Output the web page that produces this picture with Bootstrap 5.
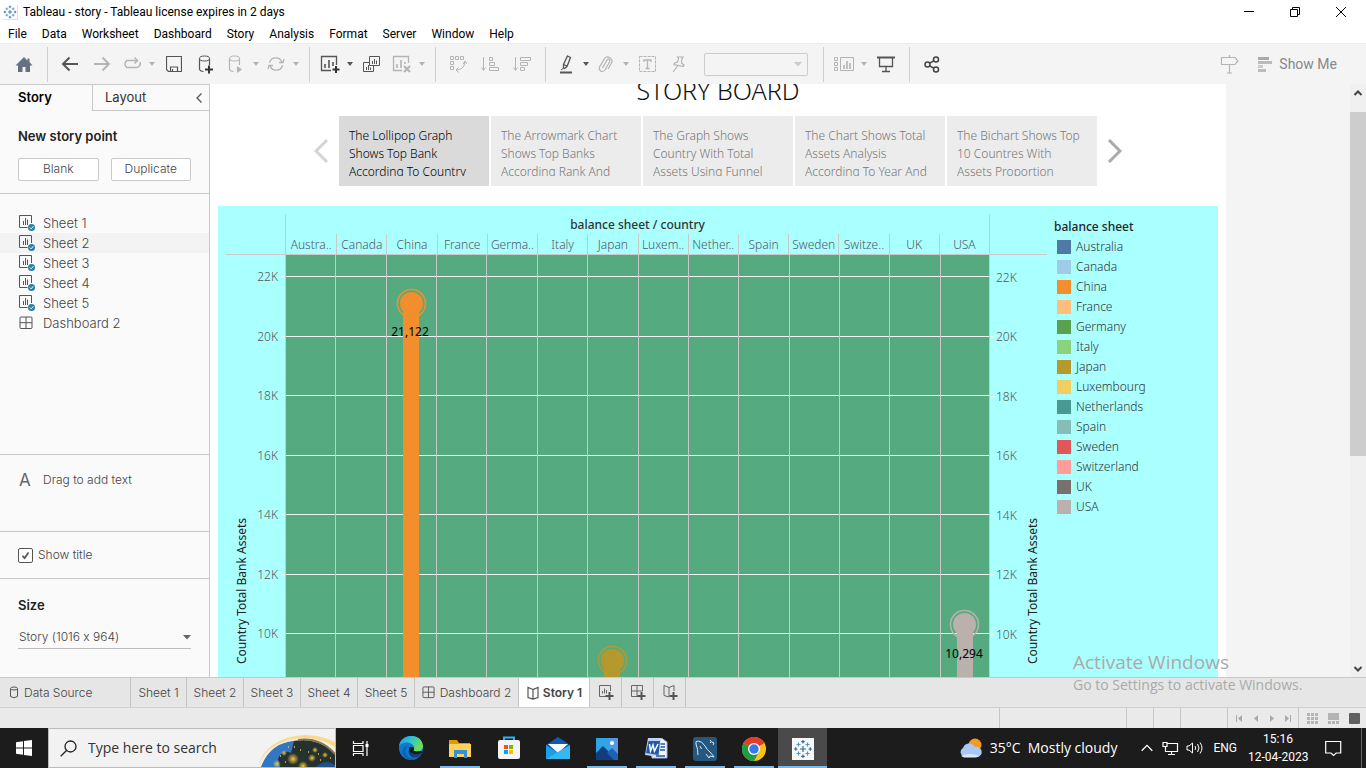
<!DOCTYPE html>
<html lang="en">
<head>
<meta charset="utf-8">
<meta name="viewport" content="width=device-width, initial-scale=1">
<title>Tableau - story</title>
<link href="https://cdn.jsdelivr.net/npm/bootstrap@5.3.0/dist/css/bootstrap.min.css" rel="stylesheet">
<style>
:root{--ui:"Open Sans","Noto Sans",sans-serif;--menu:Roboto,"Open Sans",sans-serif;--tab:Inter,Roboto,sans-serif;--viz:"Noto Sans","Open Sans",sans-serif;--rule:#c8c8c8}
body{font-family:var(--tab);font-size:13px;line-height:20px;color:#444;background:#fff}
svg{display:block;flex:none;fill:none}
button{background:none;border:0;padding:0;color:inherit}
.titlebar{height:24px;font:12px/24px var(--menu);color:#000}
.menus{height:19px;font:12px/20px var(--menu);padding-left:8px;gap:15px}
.menus a{color:#000;text-decoration:none}
.tools{height:41px;background:#f4f4f4;border-top:1px solid #ececec;color:#555}
.tools button{display:flex;align-items:center;justify-content:center;height:28px;flex:none}
.b32{width:32px}.b28{width:28px}.b12{width:12px}
.b12::after{content:"";border:3px solid transparent;border-top:4px solid currentColor;border-bottom:0}
.off{color:#b4b4b4}
.tools .showme{margin:0 29px 0 12px;gap:6px;color:#888;font:14px/20px var(--menu)}
.split{width:1px;height:35px;background:#cfcfcf;margin:0 6px 0 7px;flex:none}
.side{width:210px;flex:none;background:#fafafa;border-right:1px solid var(--rule);border-top:1px solid var(--rule)}
.side section{border-bottom:1px solid var(--rule)}
.side h2{font-size:13px;line-height:20px;font-weight:600;color:#222;margin:0}
.side .tabs{height:26px;line-height:25px;color:#333}
.side .tabs .other{border-left:1px solid var(--rule);border-bottom:1px solid var(--rule);padding:0 6px 0 12px}
.point{height:23px;border:1px solid #c8c8c8!important;border-radius:2px;background:#fff!important;font-size:12px;line-height:18px;padding-bottom:2px!important;color:#444}
.src{font-size:13px;height:20px;padding-left:18px;gap:7px}
.src.over{background:#f3f3f3}
.small12{font-size:12px}
.light{font-weight:300}
.side .form-check-input{width:15px;height:15px;margin:0;border:1px solid #555;border-radius:2px;background-color:#fff;box-shadow:none}
.side .form-check-input:checked{background-image:url("data:image/svg+xml,%3Csvg xmlns='http://www.w3.org/2000/svg' viewBox='0 0 15 15'%3E%3Cpath d='M4 8l2.5 2.5L11 4' fill='none' stroke='%23555' stroke-width='2'/%3E%3C/svg%3E")}
.size{border:0;border-bottom:1px solid #bbb;border-radius:0;background-color:transparent;font-size:12px;line-height:20px;padding:0 16px 0 1px;margin-top:11px;color:#444;height:23px;background-position:right 0 center;background-size:8px;font-weight:300;font-feature-settings:"calt" 0}
.size{background-image:url("data:image/svg+xml,%3Csvg xmlns='http://www.w3.org/2000/svg' viewBox='0 0 8 8'%3E%3Cpath d='M0 2h8L4 6.500z' fill='%23666'/%3E%3C/svg%3E")}
.pick{width:104px;height:23px;border:1px solid #ccc;border-radius:2px;margin:0 8px 0 12px;background:#f4f4f4 url("data:image/svg+xml,%3Csvg xmlns='http://www.w3.org/2000/svg' viewBox='0 0 8 8'%3E%3Cpath d='M0 2h8L4 6.500z' fill='%23ccc'/%3E%3C/svg%3E") right 5px center/8px no-repeat!important}
.stage{background:#f4f4f4;min-width:0}
.paper{width:1016px;height:964px;background:#fff;margin-top:-16px;padding:0 8px;flex:none;font-family:var(--viz)}
.paper h1{font-size:25px;line-height:44px;font-weight:300;color:#111;margin:0 0 4px;text-align:center}
.caption{width:150px;height:70px;background:#ececec;color:#777;font-size:12px;line-height:18px;padding:11px 0 10px 10px;text-align:left}
.caption span{display:block;height:49px;overflow:hidden;white-space:pre-line}
.caption.on{background:#dadada;color:#000}
.dash{background:#aff;margin-top:20px;height:760px}
.viz{width:830px;font-size:12px;flex:none}
.head{margin:8px 0 0 67px;width:705px;border:solid #c9c9c9;border-width:0 1px;height:40px}
.head .top{height:20px;line-height:22px;color:#333;font-weight:500;text-align:center}
.heads{display:grid;grid-template-columns:repeat(14,1fr);height:20px;line-height:22px;color:#556;text-align:center}
.heads div{border-left:1px solid #c9c9c9;white-space:nowrap;min-width:0;display:flex;justify-content:center}
.heads div:first-child{border:0}
.rule{height:1px;background:#c9c9c9;margin-left:8px;width:821px}
.legend{font-size:12px;color:#333;padding:11px 0 0 6px}
.legend i{width:14px;height:14px;margin:0 5px 0 3px}
.scroll{width:16px;background:#f0f0f0;flex:none}
.thumb{height:344px;background:#cdcdcd}
.sheets{height:31px;background:#e6e6e6;border-top:1px solid var(--rule);border-bottom:1px solid #d0d0d0;font-size:12px}
.sheets button{border-right:1px solid #c4c4c4;display:flex;align-items:center;gap:5px;color:#444;font-weight:300;flex:none}
.sheets .on{background:#fff;font-weight:600;color:#444}
.w57{width:57px;justify-content:center}.w32{width:32px;justify-content:center}
.status{height:20px;background:#eaeaea}
.status>div{border-left:1px solid #c6c6c6;height:20px}
.taskbar{height:40px;background:#1c1c1c;color:#fff;font-family:var(--ui)}
.taskbar .app{width:49px;height:40px;display:flex;align-items:center;justify-content:center;flex:none;border-bottom:2px solid transparent;padding-top:2px}
.taskbar .run{background:linear-gradient(#76b9ed,#76b9ed) center bottom/40px 2px no-repeat;border:0}
.taskbar .now{background-color:#4a4a4a;background-size:49px 2px}
.find{width:288px;background:#f2f2f2;border:1px solid #bbb;flex:none}
.find input{border:0;background:none;font-size:14px;color:#333;padding:0;min-width:0;outline:0}
.find input::placeholder{color:#333;opacity:1}
.tray{font:12px/18px var(--menu)}
.notice{position:absolute;right:57px;bottom:72px;width:236px;color:#aaa;font:14px/22px var(--ui);white-space:nowrap;pointer-events:none}
.notice div{font-size:19px;line-height:24px}
</style>
</head>
<body class="d-flex flex-column vh-100 overflow-hidden">
<svg width="0" height="0" class="position-absolute" aria-hidden="true">
<symbol id="plusmark" viewBox="0 0 20 20"><path d="M10 7v6M7 10h6M10 1v3.500M8.200 2.700h3.600M10 15.500V19M8.200 17.300h3.600M1 10h3.500M2.700 8.200v3.600M15.500 10H19M17.300 8.200v3.600" stroke="#2f6f9f" stroke-width="1.200"/><path d="M5.500 3.500v4M3.500 5.500h4M14.500 3.500v4M12.500 5.500h4M5.500 12.500v4M3.500 14.500h4M14.500 12.500v4M12.500 14.500h4" stroke="#5a94bb" stroke-width="1.200"/></symbol>
<symbol id="sheet" viewBox="0 0 18 18"><path d="M9.500 13.500H1.500V1.500h12V9" stroke="#555"/><path d="M5.500 11V7M7.500 11V4M9.500 11V5.500" stroke="#555"/><circle cx="13.500" cy="13.500" r="3.500" fill="#2f7fa3"/><path d="M11.800 13.500l1.300 1.300 2.200-2.500" stroke="#fff"/></symbol>
<symbol id="grid" viewBox="0 0 14 14"><rect x="1" y="1" width="12" height="11.500" rx="1" stroke="#555"/><path d="M7 1v11.500M1 6.700h12" stroke="#555"/></symbol>
<symbol id="book" viewBox="0 0 14 14"><path d="M7 3.500L2 1.500v10l5 1.500 5-1.500v-10zV13" stroke="#555" stroke-width="1.200"/></symbol>
</svg>

<header>
<div class="titlebar d-flex align-items-center">
<svg class="border-end border-bottom" width="15" height="15" style="margin:0 5px 0 3px"><use href="#plusmark"/></svg>Tableau - story - Tableau license expires in 2 days
<div class="ms-auto d-flex align-items-center" style="padding-right:19px;gap:34px">
<button aria-label="Minimize"><svg width="12" height="12"><path d="M1 5.500h10" stroke="#000"/></svg></button>
<button aria-label="Restore"><svg width="12" height="12"><path d="M1.500 3.500h7v7h-7zM3.500 3V1.500h7v7H9" stroke="#000"/></svg></button>
<button aria-label="Close"><svg width="12" height="12"><path d="M1 1l10 10M11 1L1 11" stroke="#000"/></svg></button>
</div></div>
<nav class="menus d-flex"><a href="#">File</a><a href="#">Data</a><a href="#">Worksheet</a><a href="#">Dashboard</a><a href="#">Story</a><a href="#">Analysis</a><a href="#">Format</a><a href="#">Server</a><a href="#">Window</a><a href="#">Help</a></nav>
<div class="tools d-flex align-items-center">
<button class="b32 ms-2" aria-label="Home"><svg width="18" height="17"><path d="M9 1L0.500 9.500H3V16h4.500v-5h3v5H15V9.500h2.500L14.500 6V2.500h-2V4.500z" fill="#66717f"/></svg></button>
<span class="split"></span>
<button class="b32" aria-label="Back"><svg width="18" height="16"><path d="M17 8H2M8.500 1.500L2 8l6.500 6.500" stroke="currentColor" stroke-width="2"/></svg></button>
<button class="b32 off" aria-label="Forward"><svg width="18" height="16"><path d="M1 8h15M9.500 1.500L16 8l-6.500 6.500" stroke="currentColor" stroke-width="1.800"/></svg></button>
<button class="b28 off" aria-label="Replay"><svg width="20" height="14"><path d="M15 3.500H5a4 4 0 0 0 0 7h10a4 4 0 0 0 3-5.500M12.500 .5l3 3-3 3" stroke="currentColor" stroke-width="1.500"/></svg></button>
<button class="b12 off" aria-label="Replay options"></button>
<button class="b32" aria-label="Save"><svg width="16" height="16"><path d="M.5 .5h15v15H2.500l-2-2zM4.500 15v-4h7v4M6.500 15v-2" stroke="currentColor" stroke-width="1.200"/></svg></button>
<button class="b32" aria-label="New data source"><svg width="18" height="19"><ellipse cx="7.500" cy="3.500" rx="5" ry="2.500" stroke="currentColor"/><path d="M2.500 3.500v11q1 2 4 2M12.500 3.500V10" stroke="currentColor" stroke-width="1.200"/><path d="M12 10.500v8M8 14.500h8" stroke="#333" stroke-width="2"/></svg></button>
<button class="b28 off" aria-label="Pause updates"><svg width="18" height="19"><ellipse cx="7.500" cy="3.500" rx="5" ry="2.500" stroke="currentColor"/><path d="M2.500 3.500v11q1 2 4 2M12.500 3.500V10" stroke="currentColor" stroke-width="1.200"/><path d="M10 11v7l5-3.500z" fill="currentColor"/></svg></button>
<button class="b12 off" aria-label="Pause options"></button>
<button class="b28 off" aria-label="Refresh"><svg width="18" height="16"><path d="M2.500 6.500a6.500 6.500 0 0 1 12.500 0M15.500 9.500a6.500 6.500 0 0 1-12.500 0M12 6.500h4l1-3.500M6 9.500H2L1 13" stroke="currentColor" stroke-width="1.300"/></svg></button>
<button class="b12 off" aria-label="Refresh options"></button>
<span class="split"></span>
<button class="b28" aria-label="New worksheet"><svg width="20" height="18"><path d="M11 15.500H1.500v-14h15V10" stroke="currentColor" stroke-width="1.300"/><path d="M5 13V9M9 13V5M13 11V7" stroke="currentColor" stroke-width="1.600"/><path d="M16 11v7M12.500 14.500h7" stroke="#333" stroke-width="2"/></svg></button>
<button class="b12" aria-label="New worksheet options"></button>
<button class="b32" aria-label="Duplicate"><svg width="18" height="17"><path d="M6.500 .5h10v9h-10zM6 6.500H.5v9h10V10" stroke="currentColor"/><path d="M9.500 8V5M11.500 8V3M13.500 8V4.500M3.500 14v-3M5.500 14V9M7.500 14v-2.500" stroke="currentColor"/></svg></button>
<button class="b28 off" aria-label="Clear sheet"><svg width="20" height="18"><path d="M10 15.500H1.500v-14h15V8" stroke="currentColor" stroke-width="1.300"/><path d="M5 13V9M9 13V5M13 9V7" stroke="currentColor" stroke-width="1.600"/><path d="M12 11l6 6M18 11l-6 6" stroke="currentColor" stroke-width="2"/></svg></button>
<button class="b12 off" aria-label="Clear options"></button>
<span class="split"></span>
<button class="b32 off" aria-label="Swap rows and columns"><svg width="18" height="18"><path d="M1.500 1.500h3v3h-3zM6.500 1.500h3v3h-3zM11.500 1.500h3v3h-3zM1.500 6.500h3v3h-3zM1.500 11.500h3v3h-3zM7 15q8 0 9-8M14 9l2-3 2 3M9.500 12.500L7 15l2.500 2.500" stroke="currentColor"/></svg></button>
<button class="b32 off" aria-label="Sort ascending"><svg width="18" height="16"><path d="M2.500 1v13M.5 11.500l2 3 2-3M8.500 1.500h3v3h-3zM8.500 6.500h5v3h-5zM8.500 11.500h9v3h-9z" stroke="currentColor"/></svg></button>
<button class="b32 off" aria-label="Sort descending"><svg width="18" height="16"><path d="M2.500 1v13M.5 11.500l2 3 2-3M7.500 1.500h10v3h-10zM7.500 6.500h7v3h-7zM7.500 11.500h4v3h-4z" stroke="currentColor"/></svg></button>
<span class="split"></span>
<button class="b28" aria-label="Highlight"><svg width="14" height="19"><path d="M8.500 1l3 1.500-3.500 9-2.500 2-1-.5V9.500zM4.500 9.500L8 11" stroke="currentColor" stroke-width="1.300"/><path d="M1 17.500h12" stroke="currentColor" stroke-width="2"/><path d="M2 15l2.500-2" stroke="currentColor"/></svg></button>
<button class="b12" aria-label="Highlight options"></button>
<button class="b28 off" aria-label="Group"><svg width="16" height="17"><path d="M4.500 12L9 4q1-1.500 2.200-.7T11.500 6L7 14q-2 2.500-4.200 1T1.500 11l5-8.500q2-2.500 5-1T14 6l-4 7" stroke="currentColor" stroke-width="1.200"/></svg></button>
<button class="b12 off" aria-label="Group options"></button>
<button class="b32 off" aria-label="Mark labels"><svg width="18" height="17"><rect x=".5" y=".5" width="16" height="15" stroke="currentColor" stroke-dasharray="3 1"/><path d="M5 6V4h7v2M8.500 4v8.500M6.500 12.500h4" stroke="currentColor" stroke-width="1.300"/></svg></button>
<button class="b28 off" aria-label="Fix axes"><svg width="14" height="17"><path d="M6.500 1h5.500l-1 1.500-.5 4.500 2.500 2-.5 1.500-9.500-2 .5-1.500 3-1 1-3.500zM7 9.500L2 16" stroke="currentColor" stroke-width="1.200"/></svg></button>
<select class="form-select pick" disabled aria-label="Fit"><option></option></select>
<span class="split"></span>
<button class="b28 off" aria-label="Show cards"><svg width="20" height="15"><path d="M.5 .5h3v3h-3zM.5 5.500h3v3h-3zM.5 10.500h3v3h-3zM6.500 .5h13v13h-13z" stroke="currentColor"/><path d="M10 12V8M13 12V4M16 12V6" stroke="currentColor" stroke-width="1.600"/></svg></button>
<button class="b12 off" aria-label="Card options"></button>
<button class="b32" aria-label="Presentation mode"><svg width="18" height="17"><path d="M0 1.500h18" stroke="currentColor" stroke-width="2"/><path d="M2.500 2v8.500h13V2M9 10.500V15M5 15.500h8" stroke="currentColor" stroke-width="1.300"/></svg></button>
<span class="split"></span>
<button class="b32" aria-label="Share"><svg width="16" height="17"><g stroke="#444" stroke-width="1.500"><circle cx="3.500" cy="8.500" r="2.500"/><circle cx="12" cy="3.500" r="2.500"/><circle cx="12" cy="13.500" r="2.500"/><path d="M5.700 7.200l4-2.400M5.700 9.800l4 2.400"/></g></svg></button>
<button class="b32 off ms-auto" aria-label="Guide"><svg width="20" height="19"><path d="M1.500 2.500H15l3 3.500-3 3.500H1.500zM9.500 0v2M9.500 10v8M7 18h5" stroke="currentColor" stroke-width="1.200"/></svg></button>
<button class="showme"><svg width="15" height="15"><path d="M0 1.500h11" stroke="#aaa" stroke-width="3"/><path d="M0 5.500h14M0 13.500h8" stroke="#bbb" stroke-width="3"/><path d="M0 9.500h5" stroke="#ccc" stroke-width="3"/></svg>Show Me</button>
</div>
</header>

<main class="d-flex flex-fill overflow-hidden">
<aside class="side d-flex flex-column">
<div class="tabs d-flex"><strong class="fw-semibold text-black" style="width:92px;padding-left:18px">Story</strong><div class="other flex-fill d-flex justify-content-between align-items-center">Layout<button aria-label="Collapse"><svg width="8" height="12"><path d="M6.500 1.500L2 6l4.500 4.500" stroke="#555" stroke-width="1.300"/></svg></button></div></div>
<section style="padding:15px 18px 12px"><h2>New story point</h2><div class="d-flex mt-2 pt-1" style="gap:12px"><button class="point light flex-fill w-50">Blank</button><button class="point light flex-fill w-50">Duplicate</button></div></section>
<section class="light flex-fill" style="padding-top:19px">
<div class="src d-flex align-items-center"><svg width="18" height="18"><use href="#sheet"/></svg>Sheet 1</div>
<div class="src over d-flex align-items-center"><svg width="18" height="18"><use href="#sheet"/></svg>Sheet 2</div>
<div class="src d-flex align-items-center"><svg width="18" height="18"><use href="#sheet"/></svg>Sheet 3</div>
<div class="src d-flex align-items-center"><svg width="18" height="18"><use href="#sheet"/></svg>Sheet 4</div>
<div class="src d-flex align-items-center"><svg width="18" height="18"><use href="#sheet"/></svg>Sheet 5</div>
<div class="src d-flex align-items-center"><svg width="18" height="14" viewBox="1 0 16 14"><use href="#grid" width="14" height="14" x="1"/></svg>Dashboard 2</div>
</section>
<section class="small12 light d-flex" style="padding:15px 19px 41px"><span class="fw-normal" style="width:24px;font-size:17px;color:#666">A</span>Drag to add text</section>
<section class="small12 light d-flex align-items-center" style="padding:13px 18px"><input type="checkbox" class="form-check-input" id="st" checked><label for="st" style="padding-left:5px">Show title</label></section>
<div style="padding:16px 18px 28px"><h2><label for="sz">Size</label></h2><select id="sz" class="form-select size"><option>Story (1016 x 964)</option></select></div>
</aside>

<div class="stage d-flex flex-fill overflow-hidden">
<article class="paper light">
<h1>STORY BOARD</h1>
<div class="d-flex justify-content-center align-items-center">
<button aria-label="Previous"><svg width="25" height="26"><path d="M13 2L2 13l11 11" stroke="#d4d4d4" stroke-width="3"/></svg></button>
<div class="d-flex" style="gap:2px">
<button class="caption light on"><span>The Lollipop Graph
Shows Top Bank
According To Country</span></button>
<button class="caption light"><span>The Arrowmark Chart
Shows Top Banks
According Rank And</span></button>
<button class="caption light"><span>The Graph Shows
Country With Total
Assets Using Funnel</span></button>
<button class="caption light"><span>The Chart Shows Total
Assets Analysis
According To Year And</span></button>
<button class="caption light"><span>The Bichart Shows Top
10 Countres With
Assets Proportion</span></button>
</div>
<button aria-label="Next"><svg width="25" height="26"><path d="M12 2l11 11-11 11" stroke="#aaa" stroke-width="3"/></svg></button>
</div>
<div class="dash d-flex">
<div class="viz">
<div class="head"><div class="top">balance sheet / country</div>
<div class="heads"><div>Austra..</div><div>Canada</div><div>China</div><div>France</div><div>Germa..</div><div>Italy</div><div>Japan</div><div>Luxem..</div><div>Nether..</div><div>Spain</div><div>Sweden</div><div>Switze..</div><div>UK</div><div>USA</div></div></div>
<div class="rule"></div>
<svg width="830" height="540" font-family="Noto Sans" font-size="12">
<rect x="67" width="705" height="540" fill="#55aa80"/>
<path d="M63 21.500h708M63 81.500h708M63 140.500h708M63 200.500h708M63 259.500h708M63 319.500h708M63 378.500h708M772 22.500h4M772 81.500h4M772 141.500h4M772 200.500h4M772 260.500h4M772 319.500h4M772 379.500h4" stroke="#f0f5f2"/>
<path d="M67.500 0v540M117.500 0v540M168.500 0v540M218.500 0v540M268.500 0v540M319.500 0v540M369.500 0v540M420.500 0v540M470.500 0v540M520.500 0v540M571.500 0v540M621.500 0v540M671.500 0v540M722.500 0v540M771.500 0v540" stroke="#c9c9c9"/>
<g fill="#f28e2b"><circle cx="193.500" cy="48.500" r="11.500"/><path d="M185 48h16v492h-16z"/><circle cx="193.500" cy="48.500" r="14" fill="none" stroke="#f28e2b" stroke-width="1.600"/></g>
<g fill="#b6992d"><circle cx="394.500" cy="405.500" r="11.500"/><path d="M386 405h16v130h-16z"/><circle cx="394.500" cy="405.500" r="14" fill="none" stroke="#b6992d" stroke-width="1.600"/></g>
<g fill="#bab0ac"><circle cx="746.500" cy="369.500" r="11.500"/><path d="M739 369h16v170h-16z"/><circle cx="746.500" cy="369.500" r="14" fill="none" stroke="#bab0ac" stroke-width="1.600"/></g>
<g fill="#000" text-anchor="middle" font-weight="400"><text x="192" y="81">21,122</text><text x="746" y="403">10,294</text></g>
<g fill="#555" text-anchor="end"><text x="60" y="26">22K</text><text x="60" y="86">20K</text><text x="60" y="145">18K</text><text x="60" y="205">16K</text><text x="60" y="264">14K</text><text x="60" y="324">12K</text><text x="60" y="383">10K</text></g>
<g fill="#555"><text x="778" y="27">22K</text><text x="778" y="86">20K</text><text x="778" y="146">18K</text><text x="778" y="205">16K</text><text x="778" y="265">14K</text><text x="778" y="324">12K</text><text x="778" y="384">10K</text></g>
<g fill="#222" text-anchor="middle" font-weight="400"><text transform="translate(28 336) rotate(-90)">Country Total Bank Assets</text><text transform="translate(819 336) rotate(-90)">Country Total Bank Assets</text></g>
</svg>
</div>
<div class="legend"><div class="text-dark fw-medium">balance sheet</div>
<div class="d-flex align-items-center"><i style="background:#4e79a7"></i>Australia</div>
<div class="d-flex align-items-center"><i style="background:#a0cbe8"></i>Canada</div>
<div class="d-flex align-items-center"><i style="background:#f28e2b"></i>China</div>
<div class="d-flex align-items-center"><i style="background:#ffbe7d"></i>France</div>
<div class="d-flex align-items-center"><i style="background:#59a14f"></i>Germany</div>
<div class="d-flex align-items-center"><i style="background:#8cd17d"></i>Italy</div>
<div class="d-flex align-items-center"><i style="background:#b6992d"></i>Japan</div>
<div class="d-flex align-items-center"><i style="background:#f1ce63"></i>Luxembourg</div>
<div class="d-flex align-items-center"><i style="background:#499894"></i>Netherlands</div>
<div class="d-flex align-items-center"><i style="background:#86bcb6"></i>Spain</div>
<div class="d-flex align-items-center"><i style="background:#e15759"></i>Sweden</div>
<div class="d-flex align-items-center"><i style="background:#ff9d9a"></i>Switzerland</div>
<div class="d-flex align-items-center"><i style="background:#79706e"></i>UK</div>
<div class="d-flex align-items-center"><i style="background:#bab0ac"></i>USA</div>
</div>
</div>
</article>
</div>
<div class="scroll d-flex flex-column align-items-center">
<svg width="16" height="28"><path d="M4.500 11L8 7.500l3.500 3.500" stroke="#444" stroke-width="2"/></svg>
<div class="thumb w-100"></div>
<svg class="mt-auto" width="16" height="16"><path d="M4.500 6L8 9.500 11.500 6" stroke="#444" stroke-width="2"/></svg>
</div>
</main>

<footer>
<div class="sheets d-flex">
<button style="width:131px;padding-left:9px"><svg width="10" height="13"><path d="M1.500 2.500v8q3.500 2.500 7 0v-8" stroke="#555"/><ellipse cx="5" cy="2.500" rx="3.500" ry="1.500" stroke="#555"/></svg>Data Source</button>
<button class="w57" style="width:56px">Sheet 1</button><button class="w57">Sheet 2</button><button class="w57">Sheet 3</button><button class="w57">Sheet 4</button><button class="w57">Sheet 5</button>
<button class="justify-content-center" style="width:104px"><svg width="13" height="13"><use href="#grid"/></svg>Dashboard 2</button>
<button class="on justify-content-center" style="width:71px;gap:3px"><svg width="14" height="14"><use href="#book"/></svg>Story 1</button>
<button class="w32" aria-label="New worksheet"><svg width="18" height="17"><path d="M9 12.500H2.500v-11h11V7M5.500 9.500V7M7.500 9.500v-5M9.500 9.500V6" stroke="#666"/><path d="M12.500 8v8M8.500 12h8" stroke="#555" stroke-width="2"/></svg></button>
<button class="w32" aria-label="New dashboard"><svg width="18" height="17"><path d="M9 12.500H2.500v-11h11V7M8 1.500v11M2.500 7h11" stroke="#666"/><path d="M12.500 8v8M8.500 12h8" stroke="#555" stroke-width="2"/></svg></button>
<button class="w32" aria-label="New story"><svg width="18" height="17"><path d="M8 13l-5-1.500v-10l5 2 5-2V7M8 3.500V13" stroke="#666"/><path d="M12.500 8v8M8.500 12h8" stroke="#555" stroke-width="2"/></svg></button>
</div>
<div class="status d-flex justify-content-end">
<div style="width:127px"></div><div style="width:27px"></div><div style="width:27px"></div><div style="width:47px"></div>
<div class="d-flex align-items-center" style="width:71px;padding-left:8px"><svg width="58" height="9"><path d="M.5 1v7M54.500 1v7" stroke="#aaa"/><path d="M6 1v7L2 4.500zM22 1v7l-4-3.500zM34 1v7l4-3.500zM49 1v7l4-3.500z" fill="#aaa"/></svg></div>
<div class="d-flex align-items-center" style="width:68px;padding-left:8px"><svg width="55" height="12"><path d="M0 2.500h11M0 6.500h11M0 10.500h11" stroke="#b4b4b4" stroke-width="3" stroke-dasharray="3 1"/><path d="M21 1h11v7H21z" fill="#b4b4b4"/><path d="M21 10.500h11" stroke="#b4b4b4" stroke-width="3" stroke-dasharray="3 1"/><rect x="42" y="1" width="11" height="11" rx="1" fill="#606060"/></svg></div>
</div>
<div class="taskbar d-flex align-items-stretch">
<button style="width:48px" class="d-flex align-items-center justify-content-center" aria-label="Start"><svg width="16" height="16"><path d="M0 2.300L7 1.300V7.500H0zM8 1.100L16 0v7.500H8zM0 8.500h7v6.200l-7-1zM8 8.500h8V16l-8-1.100z" fill="#fff"/></svg></button>
<div class="find d-flex align-items-center"><svg style="margin:0 11px 0 11px" width="17" height="17"><circle cx="10.500" cy="6.500" r="5.500" stroke="#222" stroke-width="1.300"/><path d="M6.500 10.500L.7 16.300" stroke="#222" stroke-width="1.300"/></svg><input type="text" class="flex-fill" placeholder="Type here to search" aria-label="Search">
<svg width="77" height="38"><defs><radialGradient id="glow"><stop offset="0" stop-color="#f5c542"/><stop offset="1" stop-color="#f5c542" stop-opacity="0"/></radialGradient></defs><ellipse cx="48" cy="42" rx="48" ry="36" fill="#f9d98a"/><ellipse cx="46" cy="45" rx="47" ry="36" fill="#f3efe2"/><ellipse cx="45" cy="49" rx="42" ry="38" fill="#26322e"/><path d="M3 38Q12 14 36 12L33 24Q24 20 20 30L22 38z" fill="#3576c4"/><path d="M58 38q10-9 19-2v2z" fill="#24508a"/><path d="M40 11q22-3 37 14" stroke="#8a7354" stroke-width="2"/><g fill="url(#glow)"><circle cx="35" cy="30" r="6"/><circle cx="54" cy="29" r="4"/><circle cx="45" cy="37" r="5"/><circle cx="19" cy="35" r="4"/><circle cx="26" cy="24" r="3"/><circle cx="57" cy="21" r="3"/><circle cx="67" cy="26" r="3"/></g><path d="M22 27h1M30 18h1M42 21h1M36 18h1M62 31h1M50 23h1M60 25h1M27 33h1M72 29h1" stroke="#f2c34a" stroke-width="1.500"/></svg></div>
<button class="app" style="width:50px" aria-label="Task view"><svg width="18" height="17"><path d="M1.500 1v2.500h9.500V1M1.500 16v-2.500h9.500V16M1.500 5.500h9.500v6H1.500zM15 1v15" stroke="#fff" stroke-width="1.200"/><path d="M13.500 4h3v3h-3z" fill="#fff"/></svg></button>
<button class="app" aria-label="Edge"><svg width="24" height="24"><defs><linearGradient id="eg" x1="0" y1="0" x2="1" y2=".4"><stop stop-color="#1a9de0"/><stop offset=".5" stop-color="#2fc0d8"/><stop offset="1" stop-color="#6ee04e"/></linearGradient></defs><circle cx="12" cy="12" r="12" fill="#0c79cf"/><path d="M0 10.500C1-3 23-4 24 10c0 5.500-6.500 6.500-9.500 4.500-1-1 1-1.500.5-3.500C14.500 8 9 5.500 4.500 7 2 8 .8 9 0 10.500z" fill="url(#eg)"/><path d="M8.500 9.500q-4.500 6 .5 11.500 5 2.500 10 .5-3 2.500-7 2.500-6.500-1-8.500-6.500-1-6 5-8z" fill="#1260b0"/><path d="M12 12q-1.500 3.500 2 5.500 4 1.500 8-.3.600.3 0 1-4 4.500-9 3-4.500-3.500-3-7.500.7-1.500 2-1.700z" fill="#10407c"/><path d="M10.500 11q-1.500 3.500 1.500 6 5 2.500 10.500 0l.8 0-.8-2-5 .5-3-.8q1.200-1.700 0-3.500z" fill="#1c1c1c"/></svg></button>
<button class="app run" aria-label="File Explorer"><svg width="24" height="20"><path d="M1 1h8l2 3h11v4H1z" fill="#e29a0b"/><path d="M1 5h22v13H1z" fill="#ffd25c"/><path d="M6 19v-8h13v8h-3v-4H9v4z" fill="#3690d8"/></svg></button>
<button class="app" aria-label="Store"><svg width="24" height="24"><path d="M7 5V1.500h10V5" stroke="#29b5ef" stroke-width="2"/><rect x="1" y="4" width="22" height="19" rx="2" fill="#f4f4f4"/><path d="M7 9h4v4H7z" fill="#f25022"/><path d="M12 9h4v4h-4z" fill="#7fba00"/><path d="M7 14h4v4H7z" fill="#00a4ef"/><path d="M12 14h4v4h-4z" fill="#ffb900"/></svg></button>
<button class="app" aria-label="Mail"><svg width="24" height="24"><path d="M0 9L12 1l12 8v14H0z" fill="#0a5cb0"/><path d="M2 8h20l-10 9z" fill="#fff"/><path d="M0 9l12 8-12 6z" fill="#1b9de8"/><path d="M24 9L0 23h24z" fill="#35b8f1"/></svg></button>
<button class="app run" aria-label="Photos"><svg width="22" height="22"><path d="M0 0h22v22H0z" fill="#2fa4e7"/><path d="M12 0h10v22h-6z" fill="#7b8be0" opacity=".5"/><path d="M0 15L7 8l14 14H0z" fill="#123f7c"/><path d="M11 15l5-5 6 6v6h-4z" fill="#1e62b5"/><circle cx="16" cy="5" r="2" fill="#fff"/></svg></button>
<button class="app run" aria-label="Word"><svg width="24" height="24"><path d="M6 1.500h12l5 3.500v16H8z" fill="#f3f6fb" stroke="#9ab3d6"/><path d="M4 1h13l-2 19L1 18z" fill="#c3d5ee"/><path d="M4.500 4h11.500l-1.500 14L2 16z" fill="#2458a8"/><path d="M5.500 7l1 7 2.500-6 1.500 6L14 7" stroke="#fff" stroke-width="1.500"/><path d="M16.500 7h4.500M16.500 10h4.500M16 13h5M12 19h9" stroke="#2458a8" stroke-width="1.500"/></svg></button>
<button class="app run" aria-label="MySQL Workbench"><svg width="24" height="24"><rect width="24" height="24" rx="3" fill="#24587e"/><path d="M5 18Q5 12 3 7q-1-3 2-3 4 0 7 5 2 4 5 6 2 2 4 5l-4-1-1 2-3-4M7 9l1.500 3M17 3l1.500 2L21 6l-1 2M17 5l1 1" stroke="#d7e7f3"/></svg></button>
<button class="app run" aria-label="Chrome"><svg width="24" height="24"><circle cx="12" cy="12" r="12" fill="#fbc116"/><path d="M12 12L1.600 6A12 12 0 0 1 22.400 6z" fill="#e33b2e"/><path d="M12 12L1.600 6A12 12 0 0 0 12 24l5-9z" fill="#229a47"/><circle cx="12" cy="12" r="6" fill="#fff"/><circle cx="12" cy="12" r="4.700" fill="#3b78e7"/></svg></button>
<button class="app run now" aria-label="Tableau"><svg width="22" height="22"><path d="M0 0h22v22H0z" fill="#f7f7f7"/><use href="#plusmark" x="1" y="1" width="20" height="20"/></svg></button>
<div class="ms-auto d-flex align-items-center" style="font-size:14px">
<svg width="26" height="22"><circle cx="17" cy="8" r="6.500" fill="#f59a23"/><path d="M6 20a5 5 0 0 1-1-9 6.500 6.500 0 0 1 12-1 5 5 0 0 1 3 10z" fill="#a9c8f5"/><path d="M3 19q8-4 18 0-2 1.500-4 1.500H6z" fill="#dbe9fd"/></svg>
<span style="margin-left:6px">35°C&nbsp; Mostly cloudy</span>
<svg style="margin-left:24px" width="12" height="8"><path d="M.7 6.700L6 1.400l5.300 5.300" stroke="#fff" stroke-width="1.300"/></svg>
<svg style="margin-left:9px" width="17" height="15"><path d="M5 2.500h10.500v8H3.500V6M9.500 10.500v3M6 13.500h7M1 1.500h4v4H1z" stroke="#fff" stroke-width="1.200"/></svg>
<svg style="margin-left:7px" width="17" height="14"><path d="M1 5v4h2l3.500 3V2L3 5zM9 5q1.500 2 0 4M11.500 3q3 4 0 8M14 1.500q4 5.500 0 11" stroke="#fff"/></svg>
<span class="tray" style="margin-left:10px">ENG</span>
<div class="tray text-center text-nowrap" style="margin-left:11px;width:60px">15:16<br>12-04-2023</div>
<svg style="margin:0 19px 0 17px" width="17" height="17"><path d="M.7 1.500h15v11.500h-4.500L8.500 15.500 6 13H.7z" stroke="#fff" stroke-width="1.200"/></svg>
<span style="width:5px;height:40px;border-left:1px solid #666"></span>
</div>
</div>
</footer>
<aside class="notice"><div>Activate Windows</div>Go to Settings to activate Windows.</aside>
<script src="https://cdn.jsdelivr.net/npm/bootstrap@5.3.0/dist/js/bootstrap.bundle.min.js"></script>
</body>
</html>
